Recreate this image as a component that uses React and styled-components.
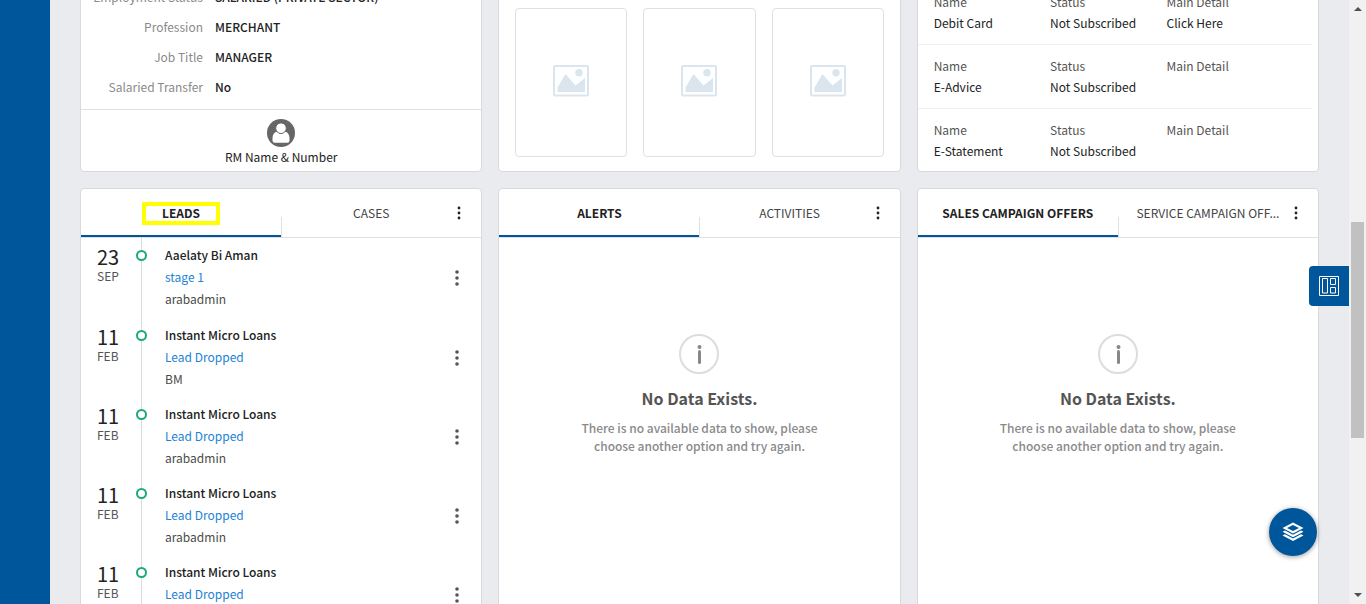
import React from "react";
import styled, { createGlobalStyle } from "styled-components";

const colors = {
  brand: "#00569b",
  page: "#e9ebee",
  border: "#d9d9dc",
  line: "#e0e0e0",
  text: "#222222",
  muted: "#555555",
  soft: "#8a8a8a",
  link: "#1c82d6",
  green: "#1aab72",
};

const GlobalStyle = createGlobalStyle`
  *, *::before { box-sizing: border-box; }
  body {
    margin: 0;
    background: ${colors.page};
    color: ${colors.text};
    font-family: "Noto Sans CJK SC", "Open Sans", sans-serif;
    font-size: 12px;
  }
  button { font: inherit; color: inherit; background: none; border: 0; padding: 0; cursor: pointer; }
  dl, dd, p, h2, ol { margin: 0; padding: 0; }
  ol { list-style: none; }
`;

const Page = styled.div`
  display: flex;
  height: 100vh;
  overflow: hidden;
`;

const Sidebar = styled.nav`
  flex: 0 0 50px;
  background: ${colors.brand};
`;

const Main = styled.main`
  flex: 1;
  min-width: 0;
  padding: 0 30px;
  overflow: hidden;
`;

const Board = styled.div`
  display: grid;
  grid-template-columns: repeat(3, minmax(0, 1fr));
  gap: 16px;
  margin-top: -20px;
`;

const Card = styled.section`
  display: flex;
  flex-direction: column;
  background: #fff;
  border: 1px solid ${colors.border};
  border-radius: 4px;
`;

const InfoList = styled.dl`
  padding: 1px 0 7px;
`;

const InfoRow = styled.div`
  display: grid;
  grid-template-columns: 122px 1fr;
  column-gap: 12px;
  line-height: 30px;
  white-space: nowrap;
  dt { text-align: right; color: ${colors.soft}; }
  dd { font-weight: 500; }
`;

const ManagerBar = styled.div`
  flex: 1;
  display: flex;
  flex-direction: column;
  align-items: center;
  padding-top: 9px;
  border-top: 1px solid ${colors.line};
  line-height: 20px;
`;

const TileRow = styled.div`
  display: grid;
  grid-template-columns: repeat(3, 1fr);
  gap: 16px;
  margin-top: auto;
  padding: 0 16px 14px;
`;

const Tile = styled.div`
  display: flex;
  align-items: center;
  justify-content: center;
  height: 149px;
  padding-bottom: 4px;
  border: 1px solid ${colors.line};
  border-radius: 4px;
`;

const Services = styled.div`
  padding: 0 6px 10px 0;
`;

const ServiceRow = styled.dl`
  display: grid;
  grid-template-columns: repeat(3, 1fr);
  padding: 10px 29px 11px 16px;
  border-bottom: 1px solid #f0f0f0;
  line-height: 21px;
  &:last-child { border-bottom: 0; padding-bottom: 0; }
  dt { color: ${colors.muted}; }
`;

const TabBar = styled.div`
  display: grid;
  grid-template-columns: 1fr 1fr;
  height: 49px;
  border-bottom: 1px solid ${colors.line};
`;

const TabHalf = styled.div`
  display: flex;
  min-width: 0;
  background: ${(p) =>
    p.$divided ? `linear-gradient(${colors.line}, ${colors.line}) left bottom / 1px 20px no-repeat` : "none"};
`;

const Tab = styled.button`
  flex: 1;
  display: flex;
  align-items: center;
  justify-content: center;
  min-width: 0;
  padding: ${(p) => (p.$active ? "2px 16px 0" : "0 0 0 14px")};
  border-bottom: ${(p) => (p.$active ? `2px solid ${colors.brand}` : "0")};
  color: ${(p) => (p.$active ? colors.text : "#444")};
  font-weight: ${(p) => (p.$active ? 700 : 400)};
  white-space: nowrap;
`;

const TabLabel = styled.span`
  line-height: 14px;
  padding: ${(p) => (p.$marked ? "0 16px 1px" : "0 0 1px")};
  border: ${(p) => (p.$marked ? "4px solid #ffff00" : "0")};
`;

const MenuButton = styled.button`
  display: flex;
  align-items: center;
  width: 34px;
  color: ${(p) => p.$tone || "#222"};
`;

const Timeline = styled.ol`
  display: flex;
  flex-direction: column;
  padding-left: 16px;
`;

const Lead = styled.li`
  display: grid;
  grid-template-columns: 39px 11px 1fr 36px;
  height: 79px;
  &:first-child { height: 80px; }
`;

const LeadDate = styled.time`
  display: flex;
  flex-direction: column;
  padding-top: 8px;
  line-height: 16px;
  color: ${colors.muted};
  b { font-size: 20px; font-weight: 400; line-height: 22px; color: ${colors.text}; }
`;

const Rail = styled.span`
  padding-top: 12px;
  background: linear-gradient(#dcdcdc, #dcdcdc) 5px 0 / 1px 100% no-repeat;
  &::before {
    content: "";
    display: block;
    height: 11px;
    border: 2px solid ${colors.green};
    border-radius: 50%;
    background: #fff;
  }
`;

const LeadBody = styled.div`
  padding: 6px 0 0 18px;
  line-height: 22px;
  color: #4a4a4a;
  h2 { font-size: 12px; font-weight: 500; line-height: 22px; color: ${colors.text}; }
  a { color: ${colors.link}; text-decoration: none; }
`;

const Empty = styled.div`
  display: flex;
  flex-direction: column;
  align-items: center;
  padding-top: 96px;
  text-align: center;
  h2 { margin: 12px 0 9px; font-size: 16px; font-weight: 700; line-height: 24px; color: ${colors.muted}; }
  p { max-width: 250px; line-height: 18px; font-weight: 500; color: ${colors.soft}; }
`;

const LayoutButton = styled.button`
  position: fixed;
  top: 266px;
  right: 17px;
  display: flex;
  align-items: center;
  justify-content: center;
  width: 40px;
  height: 40px;
  border-radius: 4px 0 0 4px;
  background: ${colors.brand};
`;

const ActionButton = styled.button`
  position: fixed;
  right: 49px;
  bottom: 48px;
  display: flex;
  align-items: center;
  justify-content: center;
  width: 48px;
  height: 48px;
  border-radius: 50%;
  background: ${colors.brand};
  box-shadow: 0 1px 5px rgba(0, 0, 0, 0.4);
`;

const Scrollbar = styled.div`
  display: flex;
  flex-direction: column;
  align-items: center;
  justify-content: space-between;
  flex: 0 0 17px;
  background: #f1f1f1;
`;

const ScrollTrack = styled.div`
  flex: 1;
  width: 13px;
  padding-top: 205px;
  &::before { content: ""; display: block; height: 216px; background: #c1c1c1; }
`;

const Arrow = ({ down }) => (
  <svg width="17" height="17" viewBox="0 0 17 17" fill="#505050">
    <path d={down ? "M5 6h8l-4 4z" : "M5 11h8l-4-4z"} />
  </svg>
);

const Dots = ({ r = 1.8, step = 6 }) => (
  <svg width="24" height="24" viewBox="0 0 24 24" fill="currentColor">
    <circle cx="12" cy={12 - step} r={r} />
    <circle cx="12" cy="12" r={r} />
    <circle cx="12" cy={12 + step} r={r} />
  </svg>
);

const PersonIcon = () => (
  <svg width="28" height="28" viewBox="0 0 28 28">
    <circle cx="14" cy="14" r="14" fill="#666" />
    <path
      fill="#fff"
      d="M9.600 12.800C7 13.400 5.500 15.700 5.500 19.500v2q0 2.300 2.300 2.300h12.400q2.300 0 2.300-2.300v-2c0-3.800-1.500-6.100-4.100-6.700z"
    />
    <circle cx="14" cy="9.200" r="5.300" fill="#fff" stroke="#666" />
  </svg>
);

const PictureIcon = () => (
  <svg width="36" height="32" viewBox="0 0 36 32" fill="#dae5ee">
    <rect x="1" y="1" width="34" height="29.500" rx="1" fill="none" stroke="#dae5ee" strokeWidth="2" />
    <path d="M4.500 22.500 12.500 9l10 11.500L32 13v14H4.500z" />
    <circle cx="26" cy="7.800" r="3.700" />
  </svg>
);

const InfoIcon = () => (
  <svg width="40" height="40" viewBox="0 0 40 40">
    <circle cx="20" cy="20" r="19" fill="none" stroke="#dcdce1" strokeWidth="2" />
    <circle cx="20.500" cy="13" r="2" fill="#888" />
    <rect x="19" y="16" width="3" height="14" rx="1.500" fill="#888" />
  </svg>
);

const LayoutIcon = () => (
  <svg width="20" height="20" viewBox="0 0 20 20" fill="none" stroke="#fff">
    <path d="M.5.500h19v19H.5z" />
    <path d="M3.500 2.500h5v14.500h-5zM11.500 2.500h5v6h-5zM11.500 11.500h5V17h-5z" />
  </svg>
);

const LayersIcon = () => (
  <svg width="22" height="20" viewBox="0 0 22 20" fill="#fff">
    <path
      fillRule="evenodd"
      d="M11 .5 21.500 6 11 11.500.5 6zM11 2.900 5 6l6 3.100L17 6z"
    />
    <path d="m.5 9.800 2.500-1.300 8 4.200 8-4.200 2.500 1.300L11 15.300z" />
    <path d="m.5 13.600 2.500-1.300 8 4.200 8-4.200 2.500 1.300L11 19.100z" />
  </svg>
);

const profile = [
  ["Employment Status", "SALARIED (PRIVATE SECTOR)"],
  ["Profession", "MERCHANT"],
  ["Job Title", "MANAGER"],
  ["Salaried Transfer", "No"],
];

const services = [
  ["Debit Card", "Not Subscribed", "Click Here"],
  ["E-Advice", "Not Subscribed", ""],
  ["E-Statement", "Not Subscribed", ""],
];

const leads = [
  ["23", "SEP", "Aaelaty Bi Aman", "stage 1", "arabadmin"],
  ["11", "FEB", "Instant Micro Loans", "Lead Dropped", "BM"],
  ["11", "FEB", "Instant Micro Loans", "Lead Dropped", "arabadmin"],
  ["11", "FEB", "Instant Micro Loans", "Lead Dropped", "arabadmin"],
  ["11", "FEB", "Instant Micro Loans", "Lead Dropped", "arabadmin"],
];

const Tabs = ({ first, second, marked }) => (
  <TabBar>
    <TabHalf>
      <Tab type="button" $active>
        <TabLabel $marked={marked}>{first}</TabLabel>
      </Tab>
    </TabHalf>
    <TabHalf $divided>
      <Tab type="button">
        <TabLabel>{second}</TabLabel>
      </Tab>
      <MenuButton type="button" aria-label="Panel options">
        <Dots r={1.4} step={5} />
      </MenuButton>
    </TabHalf>
  </TabBar>
);

const EmptyState = () => (
  <Empty>
    <InfoIcon />
    <h2>No Data Exists.</h2>
    <p>There is no available data to show, please choose another option and try again.</p>
  </Empty>
);

export default function App() {
  return (
    <Page>
      <GlobalStyle />
      <Sidebar aria-label="Main navigation" />
      <Main>
        <Board>
          <Card>
            <InfoList>
              {profile.map(([label, value]) => (
                <InfoRow key={label}>
                  <dt>{label}</dt>
                  <dd>{value}</dd>
                </InfoRow>
              ))}
            </InfoList>
            <ManagerBar>
              <PersonIcon />
              RM Name &amp; Number
            </ManagerBar>
          </Card>

          <Card>
            <TileRow>
              {[0, 1, 2].map((n) => (
                <Tile key={n}>
                  <PictureIcon />
                </Tile>
              ))}
            </TileRow>
          </Card>

          <Card>
            <Services>
              {services.map(([name, status, detail]) => (
                <ServiceRow key={name}>
                  <div><dt>Name</dt><dd>{name}</dd></div>
                  <div><dt>Status</dt><dd>{status}</dd></div>
                  <div><dt>Main Detail</dt><dd>{detail}</dd></div>
                </ServiceRow>
              ))}
            </Services>
          </Card>

          <Card>
            <Tabs first="LEADS" second="CASES" marked />
            <Timeline>
              {leads.map(([day, month, title, stage, owner], i) => (
                <Lead key={i}>
                  <LeadDate>
                    <b>{day}</b>
                    {month}
                  </LeadDate>
                  <Rail />
                  <LeadBody>
                    <h2>{title}</h2>
                    <a href="#lead">{stage}</a>
                    <p>{owner}</p>
                  </LeadBody>
                  <MenuButton type="button" $tone="#555" aria-label="Lead options">
                    <Dots />
                  </MenuButton>
                </Lead>
              ))}
            </Timeline>
          </Card>

          <Card>
            <Tabs first="ALERTS" second="ACTIVITIES" />
            <EmptyState />
          </Card>

          <Card>
            <Tabs first="SALES CAMPAIGN OFFERS" second="SERVICE CAMPAIGN OFF..." />
            <EmptyState />
          </Card>
        </Board>
      </Main>
      <Scrollbar aria-hidden="true">
        <Arrow />
        <ScrollTrack />
        <Arrow down />
      </Scrollbar>
      <LayoutButton type="button" aria-label="Layout">
        <LayoutIcon />
      </LayoutButton>
      <ActionButton type="button" aria-label="Quick actions">
        <LayersIcon />
      </ActionButton>
    </Page>
  );
}
